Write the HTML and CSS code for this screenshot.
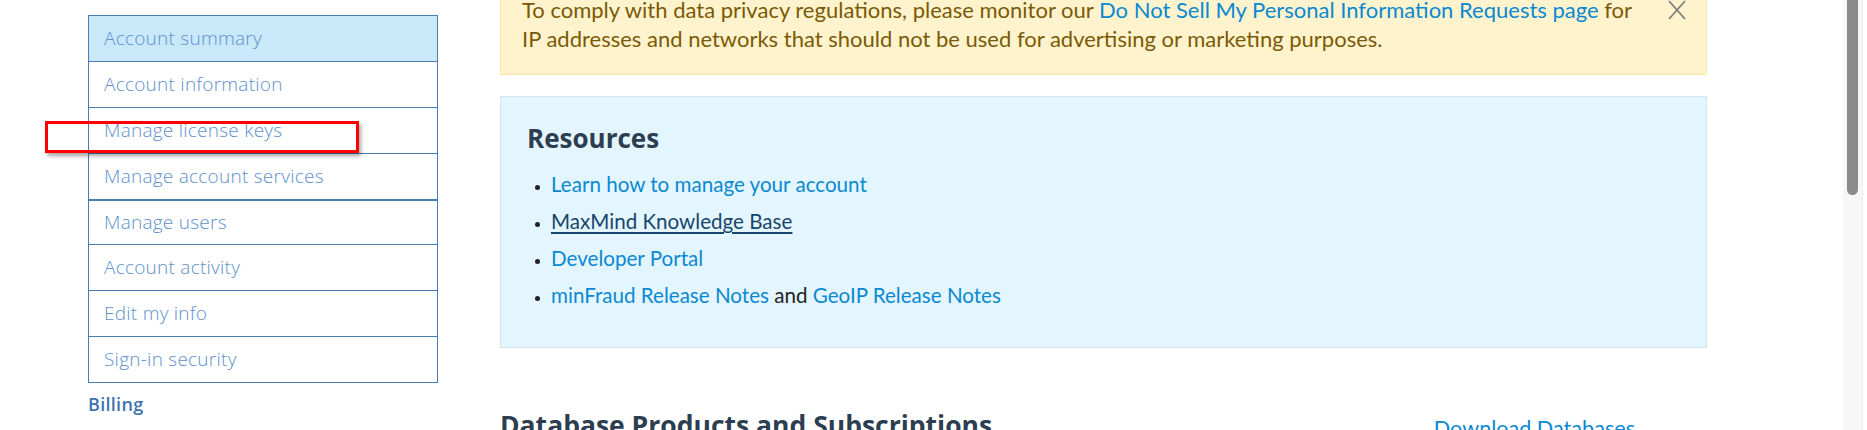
FILE: index.html
```html
<!DOCTYPE html>
<html lang="en">
<head>
<meta charset="utf-8">
<title>Account summary</title>
<link rel="stylesheet" href="styles.css">
</head>
<body>
<div class="page">
  <aside class="sidebar">
    <ul class="nav">
      <li class="nav-item active"><a href="#">Account summary</a></li>
      <li class="nav-item"><a href="#">Account information</a></li>
      <li class="nav-item"><a href="#">Manage license keys</a></li>
      <li class="nav-item"><a href="#">Manage account services</a></li>
    </ul>
    <ul class="nav nav-second">
      <li class="nav-item"><a href="#">Manage users</a></li>
      <li class="nav-item"><a href="#">Account activity</a></li>
      <li class="nav-item"><a href="#">Edit my info</a></li>
      <li class="nav-item"><a href="#">Sign-in security</a></li>
    </ul>
    <div class="nav-heading">Billing</div>
  </aside>
  <main class="content">
    <div class="alert">
      <p class="alert-text">To comply with data privacy regulations, please monitor our <a href="#">Do Not Sell My Personal Information Requests page</a> for<br>IP addresses and networks that should not be used for advertising or marketing purposes.</p>
      <button class="close" aria-label="Close">
        <svg width="20" height="20" viewBox="0 0 20 20"><path d="M2 1 L18 19 M18 1 L2 19" stroke="#7d7d7d" stroke-width="1.8" fill="none"/></svg>
      </button>
    </div>
    <section class="resources">
      <h2 class="resources-title">Resources</h2>
      <ul class="resources-list">
        <li><a href="#">Learn how to manage your account</a></li>
        <li><a href="#" class="visited">MaxMind Knowledge Base</a></li>
        <li><a href="#">Developer Portal</a></li>
        <li><a href="#">minFraud Release Notes</a> and <a href="#">GeoIP Release Notes</a></li>
      </ul>
    </section>
    <div class="section-head">
      <h2 class="section-title">Database Products and Subscriptions</h2>
      <a href="#" class="section-link">Download Databases</a>
    </div>
  </main>
</div>
<div class="annotation"></div>
<div class="scrollbar"><div class="scrollbar-thumb"></div></div>
</body>
</html>
```

FILE: styles.css
```css
* { box-sizing: border-box; }
html, body { margin: 0; padding: 0; }
body {
  width: 1867px;
  height: 430px;
  overflow: hidden;
  background: #ffffff;
  font-family: "Open Sans", "Noto Sans", sans-serif;
  position: relative;
}
a { text-decoration: none; }

.page {
  display: flex;
  align-items: flex-start;
  gap: 62px;
  padding-left: 88px;
  margin-top: -27px;
}

/* Sidebar */
.sidebar {
  width: 350px;
  flex: none;
  margin-top: 42px;
}
.nav {
  list-style: none;
  margin: 0;
  padding: 0;
  border: 1px solid #4c7ab3;
  border-bottom: none;
}
.nav-item {
  height: 46px;
  border-bottom: 1px solid #4c7ab3;
  display: flex;
  align-items: center;
  padding-left: 15px;
  padding-bottom: 2px;
}
.nav-second .nav-item:first-child { height: 44px; }
.nav-item a {
  color: #5e91cd;
  font-family: "Open Sans", sans-serif;
  font-weight: 300;
  font-size: 19px;
  letter-spacing: 0.25px;
}
.nav-item.active { background: #c9e8f9; }
.nav-heading {
  margin-top: 9px;
  color: #3e72b3;
  font-size: 18px;
  font-weight: 600;
  letter-spacing: 0.3px;
  line-height: 24px;
  padding-bottom: 14px;
  border-bottom: 1px solid #4c7ab3;
}

/* Content */
.content {
  width: 1207px;
  flex: none;
}
.alert {
  display: flex;
  align-items: flex-start;
  background: #fff3cd;
  border: 1px solid #fbe6a8;
  padding: 21px 19px 21px 21px;
}
.alert-text {
  flex: 1;
  margin: 0;
  color: #7b5a05;
  font-family: "Lato", sans-serif;
  font-size: 22px;
  line-height: 29px;
  white-space: nowrap;
}
.alert-text a { color: #0a89d2; }
.close {
  flex: none;
  width: 20px;
  height: 29px;
  padding: 0;
  border: 0;
  background: none;
  display: flex;
  align-items: center;
  justify-content: center;
}

.resources {
  margin-top: 21px;
  background: #e3f5fe;
  border: 1px solid #d6e3ec;
  padding: 26px 26px 37px 26px;
}
.resources-title {
  margin: 0;
  color: #2d3e50;
  font-family: "Open Sans", sans-serif;
  font-weight: 700;
  font-size: 26px;
  line-height: 30px;
}
.resources-list {
  margin: 16px 0 0 0;
  padding-left: 24px;
  font-family: "Lato", sans-serif;
  font-size: 20.6px;
  line-height: 30px;
  color: #222;
}
.resources-list li { margin-bottom: 7px; }
.resources-list li:last-child { margin-bottom: 0; }
.resources-list li::marker { font-size: 14px; }
.resources-list a { color: #0a89d2; }
.resources-list a.visited { color: #17466c; text-decoration: underline; text-underline-offset: 3px; }

.section-head {
  margin-top: 61px;
  display: flex;
  justify-content: space-between;
  align-items: flex-start;
  padding-right: 72px;
}
.section-title {
  margin: 0;
  color: #2d3e50;
  font-family: "Open Sans", sans-serif;
  font-weight: 700;
  font-size: 26.5px;
  line-height: 32px;
}
.section-link {
  color: #0a89d2;
  font-family: "Lato", sans-serif;
  font-size: 21.6px;
  line-height: 30px;
  margin-top: 4px;
}

/* Annotation overlay */
.annotation {
  position: absolute;
  left: 45px;
  top: 121px;
  width: 314px;
  height: 32px;
  border: 3px solid #ff0000;
  box-shadow: 2px 3px 4px rgba(0,0,0,0.35);
}

/* Scrollbar (overlay drawn at right edge) */
.scrollbar {
  position: absolute;
  top: 0;
  left: 1843px;
  width: 20px;
  height: 430px;
  background: #f7f7f7;
  border-right: 1px solid #ececec;
}
.scrollbar-thumb {
  margin-left: 4px;
  width: 11px;
  height: 195px;
  background: #8a8a8a;
  border-radius: 0 0 6px 6px;
}
```
